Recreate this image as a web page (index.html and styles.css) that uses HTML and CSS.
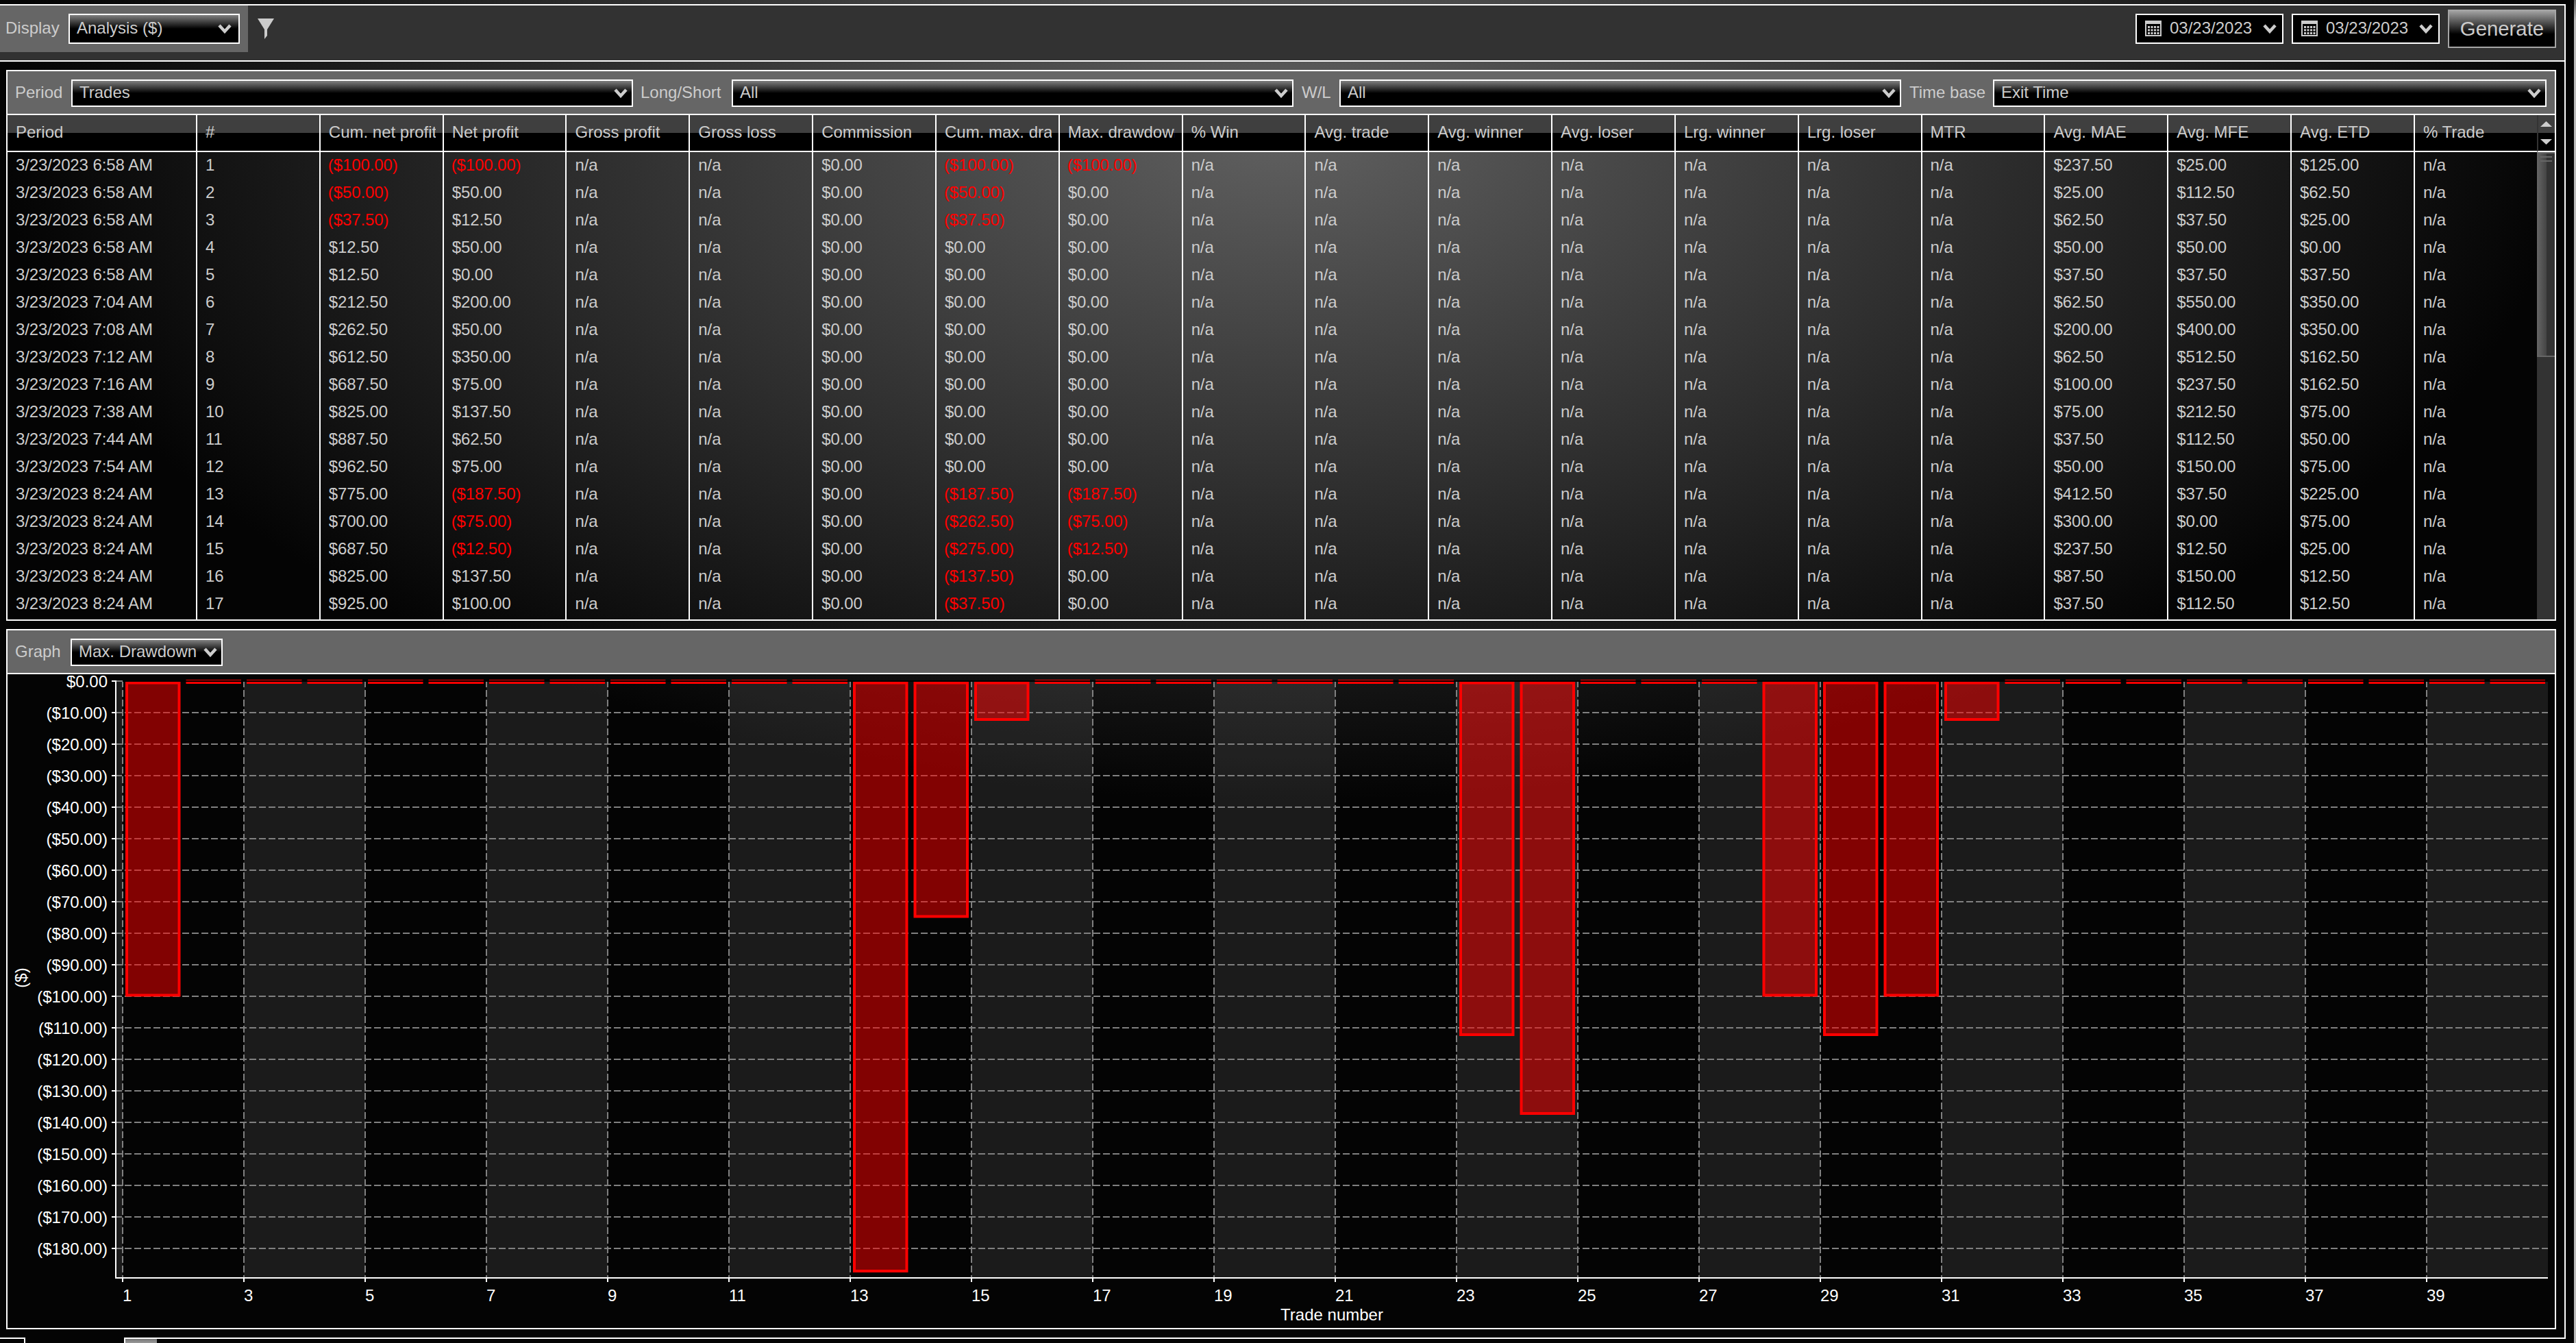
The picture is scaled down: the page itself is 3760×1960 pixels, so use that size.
FILE: index.html
```html
<!DOCTYPE html>
<html lang="en">

<head>
    <meta charset="UTF-8">
    <title>Trade Performance</title>
    <link rel="stylesheet" href="styles.css">
</head>

<body>
    <div class="app">
        <div class="window">
            <div class="toolbar">
                <div class="display">
                    <span class="label">Display</span>
                    <div class="combo tall">Analysis ($)<svg class="chevron" width="20" height="14"><path d="M2 2L10 10.8L18 2" /></svg></div>
                </div>
                <svg class="filter" width="24" height="30"><path d="M0 0H24L14 16V25L10 30V16Z" /></svg>
                <div class="dates">
                    <div class="date">
                        <svg class="calendar" width="24" height="23"><use href="#cal" /></svg>
                        03/23/2023
                        <svg class="chevron" width="20" height="14"><path d="M2 2L10 10.8L18 2" /></svg>
                    </div>
                    <div class="date">
                        <svg class="calendar" width="24" height="23"><use href="#cal" /></svg>
                        03/23/2023
                        <svg class="chevron" width="20" height="14"><path d="M2 2L10 10.8L18 2" /></svg>
                    </div>
                    <div class="generate">Generate</div>
                </div>
            </div>

            <div class="panel trades">
                <div class="bar">
                    <span class="label period">Period</span>
                    <div class="combo wide">Trades<svg class="chevron" width="20" height="14"><path d="M2 2L10 10.8L18 2" /></svg></div>
                    <span class="label side">Long/Short</span>
                    <div class="combo wide">All<svg class="chevron" width="20" height="14"><path d="M2 2L10 10.8L18 2" /></svg></div>
                    <span class="label wl">W/L</span>
                    <div class="combo wide">All<svg class="chevron" width="20" height="14"><path d="M2 2L10 10.8L18 2" /></svg></div>
                    <span class="label base">Time base</span>
                    <div class="combo rest">Exit Time<svg class="chevron" width="20" height="14"><path d="M2 2L10 10.8L18 2" /></svg></div>
                </div>
                <div class="table">
                    <div class="cols">
                        <div class="row head" id="head"></div>
                        <div id="rows"></div>
                    </div>
                    <div class="scroll">
                        <div class="arrows">
                            <svg width="17" height="34"><path d="M0 8L8.5 0L17 8ZM0 26H17L8.5 34Z" /></svg>
                        </div>
                        <div class="track">
                            <div class="thumb"><i></i><i></i></div>
                        </div>
                    </div>
                </div>
            </div>

            <div class="panel graph">
                <div class="bar">
                    <span class="label period">Graph</span>
                    <div class="combo small">Max. Drawdown<svg class="chevron" width="20" height="14"><path d="M2 2L10 10.8L18 2" /></svg></div>
                </div>
                <svg id="chart" width="3718" height="954" viewBox="11 984 3718 954"></svg>
            </div>
        </div>
        <div class="tabs">
            <div class="tab first"></div>
            <div class="tab last"><span></span></div>
        </div>
    </div>
    <div class="edge"></div>

    <svg width="0" height="0" class="defs">
        <symbol id="cal" viewBox="0 0 24 23">
            <path d="M0 0H24V23H0ZM2 5V21H22V5Z" fill-rule="evenodd" />
            <path d="M4 8h3v3h-3zM8.5 8h3v3h-3zM13 8h3v3h-3zM17.500 8h3v3h-3zM4 12.500h3v3h-3zM8.500 12.500h3v3h-3zM13 12.500h3v3h-3zM17.500 12.500h3v3h-3zM4 17h3v3h-3zM8.500 17h3v3h-3zM13 17h3v3h-3zM17.500 17h3v3h-3z" />
        </symbol>
    </svg>

    <script>
        var heads = ["Period", "#", "Cum. net profit", "Net profit", "Gross profit", "Gross loss", "Commission",
            "Cum. max. dra", "Max. drawdown", "% Win", "Avg. trade", "Avg. winner", "Avg. loser",
            "Lrg. winner", "Lrg. loser", "MTR", "Avg. MAE", "Avg. MFE", "Avg. ETD", "% Trade"];

        // time, cum. net, net, cum. drawdown, drawdown, MAE, MFE, ETD
        var trades = [
            ["6:58", -100, -100, -100, -100, 237.5, 25, 125],
            ["6:58", -50, 50, -50, 0, 25, 112.5, 62.5],
            ["6:58", -37.5, 12.5, -37.5, 0, 62.5, 37.5, 25],
            ["6:58", 12.5, 50, 0, 0, 50, 50, 0],
            ["6:58", 12.5, 0, 0, 0, 37.5, 37.5, 37.5],
            ["7:04", 212.5, 200, 0, 0, 62.5, 550, 350],
            ["7:08", 262.5, 50, 0, 0, 200, 400, 350],
            ["7:12", 612.5, 350, 0, 0, 62.5, 512.5, 162.5],
            ["7:16", 687.5, 75, 0, 0, 100, 237.5, 162.5],
            ["7:38", 825, 137.5, 0, 0, 75, 212.5, 75],
            ["7:44", 887.5, 62.5, 0, 0, 37.5, 112.5, 50],
            ["7:54", 962.5, 75, 0, 0, 50, 150, 75],
            ["8:24", 775, -187.5, -187.5, -187.5, 412.5, 37.5, 225],
            ["8:24", 700, -75, -262.5, -75, 300, 0, 75],
            ["8:24", 687.5, -12.5, -275, -12.5, 237.5, 12.5, 25],
            ["8:24", 825, 137.5, -137.5, 0, 87.5, 150, 12.5],
            ["8:24", 925, 100, -37.5, 0, 37.5, 112.5, 12.5]
        ];

        function money(n) {
            var s = "$" + Math.abs(n).toFixed(2);
            return n < 0 ? "(" + s + ")" : s;
        }

        function cell(v) {
            var text = typeof v == "number" ? money(v) : v;
            return "<div class='cell" + (v < 0 ? " neg" : "") + "'>" + "<span>" + text + "</span></div>";
        }

        myId("head").innerHTML = heads.map(cell).join("");

        var html = "";
        for (var i = 0; i < trades.length; i++) {
            var t = trades[i];
            var na = "n/a";
            var row = ["3/23/2023 " + t[0] + " AM", String(i + 1), t[1], t[2], na, na, 0, t[3], t[4],
                na, na, na, na, na, na, na, t[5], t[6], t[7], na];
            html += "<div class='row'>" + row.map(cell).join("") + "</div>";
        }
        myId("rows").innerHTML = html;

        // chart
        var left = 168, zero = 994, bottom = 1864, right = 3719;
        var first = 179, step = 88.5, perDollar = 4.6;
        var drawdown = { 1: 100, 13: 187.5, 14: 75, 15: 12.5, 23: 112.5, 24: 137.5, 28: 100, 29: 112.5, 30: 100, 31: 12.5 };
        var svg = "";

        // light bands
        svg += rect("band", 170, 995, first - 170, bottom - 995);
        for (var n = 3; n < 40; n += 4) {
            svg += rect("band", first + (n - 1) * step, 995, step * 2, bottom - 995);
        }
        // grid and labels
        for (var d = 0; d <= 180; d += 10) {
            var y = zero + d * perDollar;
            if (d > 0) svg += line("grid", left, y, right, y);
            else svg += line("grid", left, y, first, y);
            svg += line("axis", 163, y, 169, y);
            svg += "<text class='end' x='157' y='" + (y + 8.5) + "'>" + money(-d) + "</text>";
        }
        for (var n = 1; n < 40; n += 2) {
            var x = first + (n - 1) * step;
            svg += line("grid", x, 993, x, bottom + 1);
            svg += "<text x='" + x + "' y='1899'>" + n + "</text>";
        }
        // bars
        for (var n = 1; n <= 40; n++) {
            var x = first + (n - 1) * step + 4;
            if (drawdown[n]) {
                svg += rect("loss", x + 2, 996.5, 76.5, drawdown[n] * perDollar - 4);
            } else {
                svg += rect("none", x, 992, 80.5, 6);
            }
        }
        svg += rect("zero", first, 993, right - first, 2);
        svg += line("axis", 169, 993, 169, bottom + 2);
        svg += line("axis", left, bottom + 1, right, bottom + 1);
        for (var n = 1; n < 40; n += 2) {
            var x = first + (n - 1) * step;
            svg += line("axis", x, bottom + 2, x, bottom + 7);
        }
        svg += "<text class='mid' x='1944' y='1927'>Trade number</text>";
        svg += "<text class='mid' transform='translate(39 1427) rotate(-90)'>($)</text>";
        myId("chart").innerHTML = svg;

        function rect(cls, x, y, w, h) {
            return "<rect class='" + cls + "' x='" + x + "' y='" + y + "' width='" + w + "' height='" + h + "'/>";
        }

        function line(cls, x1, y1, x2, y2) {
            return "<line class='" + cls + "' x1='" + x1 + "' y1='" + y1 + "' x2='" + x2 + "' y2='" + y2 + "'/>";
        }

        function myId(id) {
            return document.getElementById(id);
        }
    </script>
</body>
</html>
```
FILE: styles.css
```css
* {
    padding: 0;
    margin: 0;
    box-sizing: border-box;
}

body {
    width: 3760px;
    height: 1960px;
    overflow: hidden;
    display: flex;
    font-family: "Liberation Sans", Arial, sans-serif;
    font-size: 24px;
    color: #ccc;
    white-space: nowrap;
    background: radial-gradient(ellipse 1872px 977px at 1872px 192px, #606060, #040404);
}

.app {
    width: 3757px;
    height: 1960px;
    padding-top: 6px;
}

.edge {
    width: 3px;
    background: linear-gradient(#666 0, #bbb 30px, #bbb 100%);
}

.defs {
    position: absolute;
}

.window {
    width: 3745px;
    height: 1946px;
    border: solid #fff;
    border-width: 2px 2px 0 0;
}

/* top toolbar */
.toolbar {
    display: flex;
    height: 82px;
    background: #323232;
    border-bottom: 2px solid #fff;
}

.display {
    display: flex;
    width: 362px;
    height: 68px;
    padding: 12px 0 0 8px;
    background: #666;
}

.display .label {
    width: 92px;
    line-height: 41px;
}

.filter {
    margin: 19px 0 0 14px;
    fill: #ccc;
}

.dates {
    display: flex;
    margin-left: auto;
    padding: 6px 12px 0 0;
}

.date {
    display: flex;
    width: 216px;
    height: 44px;
    margin: 6px 12px 0 0;
    padding: 0 8px 0 12px;
    border: 2px solid #fff;
    background: #000;
    line-height: 38px;
}

.calendar {
    margin: 8px 12px 0 0;
    fill: #ccc;
}

.generate {
    width: 158px;
    height: 56px;
    border: 2px solid #a6a6a6;
    background: linear-gradient(#a2a2a2, #000 65%);
    font-size: 29.33px;
    line-height: 52px;
    text-align: center;
}

.combo {
    display: flex;
    height: 40px;
    padding: 0 6px 0 10px;
    border: 2px solid #fff;
    background: linear-gradient(#808080, #000 50%);
    line-height: 34px;
}

.combo.tall {
    width: 250px;
    height: 44px;
    padding-right: 10px;
    line-height: 37px;
}

.combo.wide {
    width: 820px;
}

.combo.rest {
    width: 808px;
}

.combo.small {
    width: 222px;
    padding-left: 10px;
}

.chevron {
    margin: 11px 0 0 auto;
    fill: none;
    stroke: #ccc;
    stroke-width: 4.5;
}

.tall .chevron,
.date .chevron {
    margin-top: 13px;
}

/* panels */
.panel {
    width: 3722px;
    margin: 12px 0 0 9px;
    border: 2px solid #fff;
}

.trades {
    height: 804px;
}

.graph {
    height: 1022px;
}

.bar {
    display: flex;
    height: 64px;
    padding-top: 12px;
    padding-left: 11px;
    background: #666;
    border-bottom: 2px solid #fff;
}

.bar .label {
    line-height: 38px;
}

.period {
    width: 82px;
}

.graph .period {
    width: 81px;
}

.side {
    width: 144px;
    padding-left: 11px;
}

.wl {
    width: 67px;
    padding-left: 12px;
}

.base {
    width: 134px;
    padding-left: 12px;
}

/* trades table */
.table {
    display: flex;
}

.cols {
    width: 3692px;
}

.row {
    display: grid;
    grid-template-columns: 277px repeat(18, 179.83px) 1fr;
    height: 40px;
    line-height: 38px;
    letter-spacing: -0.1px;
}

.row:last-child {
    height: 42px;
}

.row.head {
    height: 54px;
    line-height: 50px;
    letter-spacing: 0;
    background: linear-gradient(#3f3f3f 26px, #000 26px);
    border-bottom: 2px solid #fff;
}

.cell {
    min-width: 0;
    padding: 0 10px 0 12px;
    border-right: 2px solid #fff;
}

.cell:last-child {
    border-right: 0;
}

.cell span {
    display: block;
    overflow: hidden;
}

.neg {
    padding-left: 11px;
    color: #f00;
}

.scroll {
    width: 26px;
}

.arrows {
    height: 54px;
    padding: 9px 0 0 3px;
    border-left: 2px solid #333;
    border-bottom: 2px solid #fff;
    background: linear-gradient(#3f3f3f 26px, #000 26px);
}

.arrows svg {
    display: block;
    fill: #ccc;
}

.track {
    height: 682px;
    background: #333;
}

.thumb {
    height: 299px;
    padding: 4px 4px 0 5px;
    border: solid #666;
    border-width: 2px 0;
    background: linear-gradient(90deg, #666, #444 14px, #333 14px);
}

.thumb i {
    display: block;
    height: 2px;
    margin-bottom: 4px;
    background: #666;
}

/* chart */
#chart {
    display: block;
    fill: #fff;
}

.band {
    fill: rgba(255, 255, 255, 0.096);
}

.grid {
    stroke: #808080;
    stroke-width: 2;
    stroke-dasharray: 10 4;
}

.axis {
    stroke: #fff;
    stroke-width: 2;
}

.loss {
    fill: rgba(255, 0, 0, 0.5);
    stroke: #f00;
    stroke-width: 4;
}

.none {
    fill: #f00;
}

.zero {
    fill: #000;
}

.end {
    text-anchor: end;
}

.mid {
    text-anchor: middle;
}

/* bottom tabs */
.tabs {
    display: flex;
    justify-content: space-between;
    width: 3745px;
    height: 8px;
}

.tab {
    border-top: 2px solid #fff;
}

.first {
    width: 37px;
    border-right: 2px solid #fff;
}

.last {
    width: 3564px;
    border-left: 2px solid #fff;
}

.last span {
    display: block;
    width: 46px;
    height: 6px;
    background: linear-gradient(#777, #999);
}
```
